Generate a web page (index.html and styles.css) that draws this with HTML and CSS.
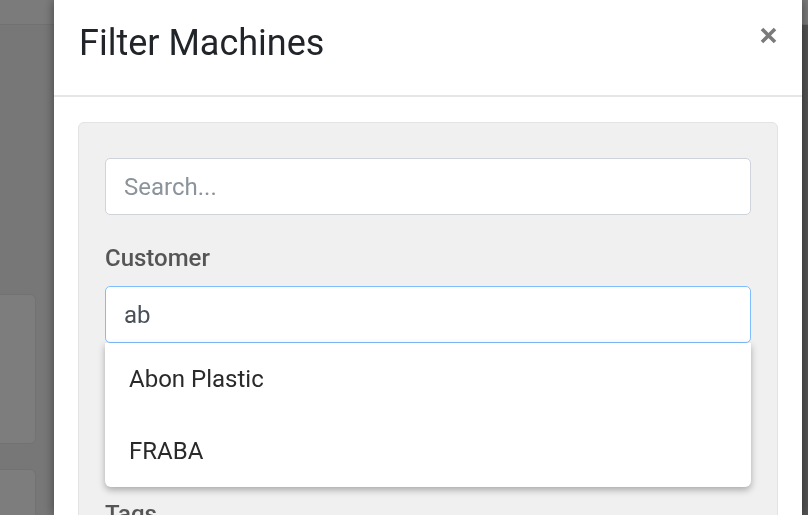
FILE: index.html
```html
<!DOCTYPE html>
<html lang="en">
<head>
    <meta charset="UTF-8">
    <meta name="viewport" content="width=device-width, initial-scale=1.0">
    <title>Machines</title>
    <link rel="stylesheet" href="styles.css">
</head>
<body>
    <!-- page behind the modal -->
    <div class="page">
        <div class="topbar"></div>
        <div class="page-body">
            <div class="card-column">
                <div class="machine-card"></div>
                <div class="machine-card"></div>
            </div>
            <div class="page-main"></div>
            <div class="page-edge"></div>
        </div>
    </div>

    <div class="backdrop"></div>

    <div class="modal">
        <div class="modal-header">
            <h5 class="modal-title">Filter Machines</h5>
            <button class="close" type="button" aria-label="Close">
                <svg width="17" height="17" viewBox="0 0 17 17">
                    <path d="M2 2 L15 15 M15 2 L2 15" stroke="#7a7a7a" stroke-width="3.6" fill="none"/>
                </svg>
            </button>
        </div>
        <div class="modal-body">
            <div class="filter-panel">
                <input class="form-control" type="text" placeholder="Search...">

                <div class="form-group">
                    <label>Customer</label>
                    <div class="typeahead">
                        <input class="form-control focused" type="text" value="ab">
                        <ul class="suggestions">
                            <li>Abon Plastic</li>
                            <li>FRABA</li>
                        </ul>
                    </div>
                </div>

                <div class="form-group">
                    <label>Country</label>
                    <input class="form-control" type="text">
                </div>

                <div class="form-group">
                    <label>Tags</label>
                    <input class="form-control" type="text">
                </div>
            </div>
        </div>
    </div>
</body>
</html>
```

FILE: styles.css
```css
body {
    margin: 0;
    padding: 0;
    font-family: Roboto, "Open Sans", Arial, sans-serif;
    overflow: hidden;
}

/* page behind the overlay */
.page {
    height: 515px;
    background-color: #eeeeee;
    display: flex;
    flex-direction: column;
    overflow: hidden;
}

.topbar {
    flex-shrink: 0;
    height: 24px;
    background-color: #f6f6f6;
    border-bottom: 1px solid #e2e2e2;
}

.page-body {
    flex: 1;
    min-height: 0;
    display: flex;
}

.card-column {
    width: 36px;
    padding-top: 269px;
    display: flex;
    flex-direction: column;
    gap: 25px;
}

.machine-card {
    flex-shrink: 0;
    height: 148px;
    margin-left: -10px;
    background-color: #fbfbfb;
    border: 1px solid #e4e4e4;
    border-radius: 6px;
}

.page-main {
    flex: 1;
}

.page-edge {
    width: 6px;
    background-color: #a8a8a8;
}

.backdrop {
    position: fixed;
    inset: 0;
    background-color: rgba(0, 0, 0, 0.5);
}

/* modal */
.modal {
    position: fixed;
    top: 0;
    left: 54px;
    width: 748px;
    height: 515px;
    background-color: #fff;
    box-shadow: 0 0 10px rgba(0, 0, 0, 0.45);
    overflow: hidden;
}

.modal-header {
    display: flex;
    justify-content: space-between;
    align-items: flex-start;
    padding: 22px 25px 30px 25px;
    border-bottom: 2px solid #e6e6e6;
}

.modal-title {
    margin: 0;
    font-size: 36px;
    font-weight: 400;
    line-height: 43px;
    color: #212529;
}

.close {
    margin-top: 5px;
    padding: 0;
    border: none;
    background: none;
    line-height: 0;
    cursor: pointer;
}

.modal-body {
    padding: 25px 24px;
}

.filter-panel {
    background-color: #f0f0f0;
    border: 1px solid #e3e3e3;
    border-radius: 6px;
    padding: 35px 26px 40px 26px;
}

.form-control {
    display: block;
    box-sizing: border-box;
    width: 100%;
    height: 57px;
    padding: 9px 18px;
    font-family: Roboto, Arial, sans-serif;
    font-size: 24px;
    color: #495057;
    background-color: #fff;
    border: 1px solid #ced4da;
    border-radius: 5px;
    outline: none;
}

.form-control::placeholder {
    color: #8b949c;
}

.form-control.focused {
    border-color: #80bdff;
}

.form-group {
    margin-top: 25px;
}

.form-group label {
    display: block;
    margin-bottom: 10px;
    font-size: 24px;
    font-weight: 500;
    line-height: 36px;
    color: #555;
}

.typeahead {
    position: relative;
}

.suggestions {
    position: absolute;
    top: 100%;
    left: 0;
    right: 0;
    margin: 0;
    padding: 0;
    list-style: none;
    background-color: #fff;
    border-radius: 0 0 6px 6px;
    box-shadow: 0 3px 7px rgba(0, 0, 0, 0.3);
    z-index: 5;
}

.suggestions li {
    height: 72px;
    padding: 0 24px;
    display: flex;
    align-items: center;
    font-size: 24px;
    color: #2a2a2a;
}
```
